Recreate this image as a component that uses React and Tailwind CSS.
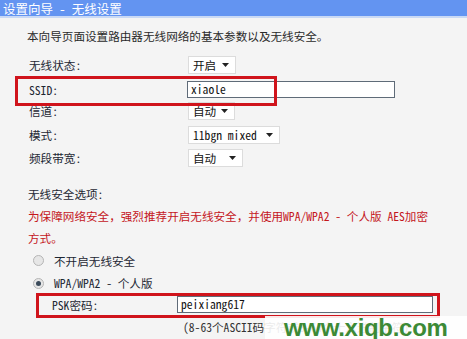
import React from 'react';

const cjk = "font-['Noto_Sans_Mono_CJK_SC','Noto_Sans_CJK_SC','Liberation_Mono',monospace]";

function Arrow() {
  return (
    <svg width="7" height="4" viewBox="0 0 7 4" className="shrink-0">
      <path d="M0 0h7L3.5 4z" fill="#222" />
    </svg>
  );
}

function Select({ value, width }) {
  return (
    <div
      className="h-[18px] bg-white border border-[#dcdcdc] flex items-center pl-[4px] pr-[6px] justify-between text-[#111]"
      style={{ width }}
    >
      <span>{value}</span>
      <Arrow />
    </div>
  );
}

function Row({ label, children, className = '' }) {
  return (
    <div className={`flex items-center ${className}`}>
      <div className="w-[188px] pl-[29px] text-[#1d2733]">{label}</div>
      {children}
    </div>
  );
}

function Radio({ checked }) {
  return (
    <span className="w-[11px] h-[11px] rounded-full border border-[#b5b5b5] bg-[#e6e6e6] flex items-center justify-center shrink-0">
      {checked && <span className="w-[5px] h-[5px] rounded-full bg-[#3a4a5a]" />}
    </span>
  );
}

export default function App() {
  return (
    <div className={`relative w-[467px] h-[339px] overflow-hidden bg-[#f4f4f4] text-[11.6px] leading-[16px] ${cjk}`}>
      {/* Title bar */}
      <div className="h-[18px] bg-[#6394f1] border-b-2 border-[#c9d9f5] text-white text-[12.5px] leading-[17px] pl-[3px]">
        设置向导 - 无线设置
      </div>

      <div className="pl-[27px] mt-[10px] text-[#2a2a2a]">本向导页面设置路由器无线网络的基本参数以及无线安全。</div>

      <div className="flex flex-col">
        <Row label="无线状态:" className="mt-[12px]">
          <Select value="开启" width={48} />
        </Row>
        <Row label="SSID:" className="mt-[7px]">
          <div className="h-[17px] w-[208px] -ml-[1px] bg-white border border-[#5f6b78] pl-[3px] leading-[15px] text-[#111]">xiaole</div>
        </Row>
        <Row label="信道:" className="mt-[4px]">
          <Select value="自动" width={47} />
        </Row>
        <Row label="模式:" className="mt-[6px]">
          <Select value="11bgn mixed" width={92} />
        </Row>
        <Row label="频段带宽:" className="mt-[5px]">
          <Select value="自动" width={55} />
        </Row>
      </div>

      <div className="pl-[28px] mt-[19px] text-[#1d2733]">无线安全选项:</div>
      <div className="pl-[28px] mt-[3px] leading-[22px] text-[#c4161c] whitespace-nowrap">
        为保障网络安全，强烈推荐开启无线安全，并使用WPA/WPA2 - 个人版 AES加密
        <br />
        方式。
      </div>

      <div className="flex items-center h-[23px] pl-[33px] gap-[10px] text-[#1d2733]">
        <Radio />
        <span>不开启无线安全</span>
      </div>
      <div className="flex items-center h-[22px] pl-[33px] gap-[10px] text-[#1d2733]">
        <Radio checked />
        <span>WPA/WPA2 - 个人版</span>
      </div>

      <div className="flex items-center mt-[2px]">
        <div className="w-[177px] pl-[52px] text-[#1d2733]">PSK密码:</div>
        <div className="h-[17px] w-[256px] bg-white border border-[#5f6b78] pl-[3px] leading-[15px] text-[#111]">peixiang617</div>
      </div>
      <div className="pl-[183px] mt-[6px] text-[#333] whitespace-nowrap">(8-63个ASCII码字符或8-64个十六进制字符)</div>

      {/* Annotation boxes */}
      <div className="absolute left-[15px] top-[76px] w-[262px] h-[30px] border-[3px] border-[#d0141c]" />
      <div className="absolute left-[36px] top-[293px] w-[404px] h-[25px] border-[3px] border-[#d0141c]" />

      {/* Watermark */}
      <div className="absolute left-[265px] top-[316px] w-[202px] h-[23px] bg-white/90 flex items-center pl-[19px] font-['Liberation_Sans',Arial,sans-serif] font-bold text-[24px] leading-none text-[#3c8a36] tracking-[-0.3px]">
        www.xiqb.com
      </div>
    </div>
  );
}
